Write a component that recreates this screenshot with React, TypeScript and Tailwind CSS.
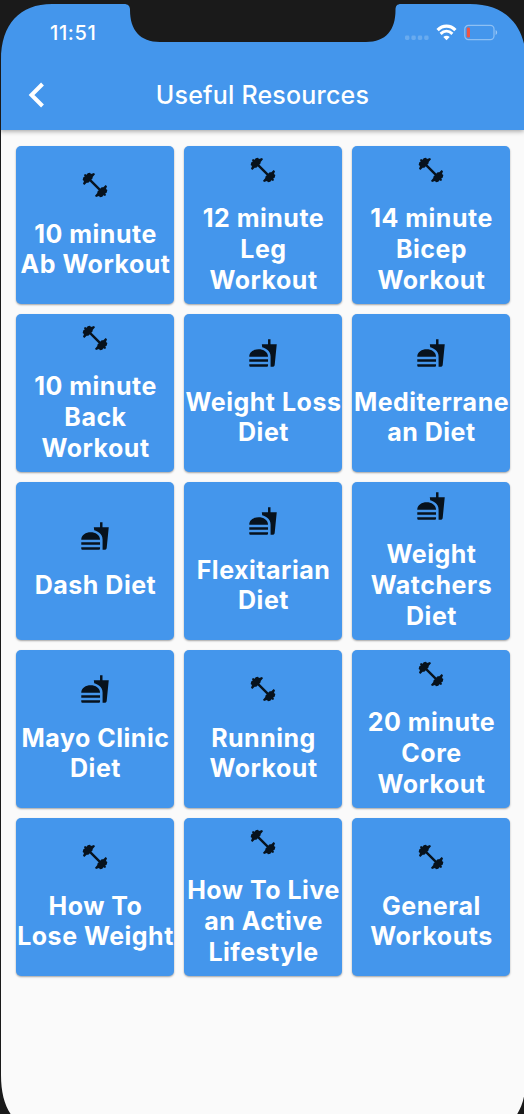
import React from 'react';
import { MdFastfood } from 'react-icons/md';

type Kind = 'workout' | 'diet';

interface Resource {
  kind: Kind;
  lines: string[];
}

const resources: Resource[] = [
  { kind: 'workout', lines: ['10 minute', 'Ab Workout'] },
  { kind: 'workout', lines: ['12 minute', 'Leg', 'Workout'] },
  { kind: 'workout', lines: ['14 minute', 'Bicep', 'Workout'] },
  { kind: 'workout', lines: ['10 minute', 'Back', 'Workout'] },
  { kind: 'diet', lines: ['Weight Loss', 'Diet'] },
  { kind: 'diet', lines: ['Mediterrane', 'an Diet'] },
  { kind: 'diet', lines: ['Dash Diet'] },
  { kind: 'diet', lines: ['Flexitarian', 'Diet'] },
  { kind: 'diet', lines: ['Weight', 'Watchers', 'Diet'] },
  { kind: 'diet', lines: ['Mayo Clinic', 'Diet'] },
  { kind: 'workout', lines: ['Running', 'Workout'] },
  { kind: 'workout', lines: ['20 minute', 'Core', 'Workout'] },
  { kind: 'workout', lines: ['How To', 'Lose Weight'] },
  { kind: 'workout', lines: ['How To Live', 'an Active', 'Lifestyle'] },
  { kind: 'workout', lines: ['General', 'Workouts'] },
];

const PLATES = 'M43 10 46 14 39 22 39 26 26 39 21 39 14 46 10 42 13 34 9 31 11 23 15 21 13 16 16 13 21 15 24 11 31 9 34 13Z';

const DumbbellIcon = () => (
  <svg viewBox="1 1 90 90" className="size-[30px] shrink-0" fill="#07121d">
    <path d="M24 24 69 69" stroke="#07121d" strokeWidth="7" />
    <path d={PLATES} />
    <path d={PLATES} transform="rotate(180 46 46)" />
  </svg>
);

const StatusBar = () => (
  <div className="flex h-[60px] items-start justify-between pr-[26px] pl-[50px] text-white">
    <span className="mt-[21px] text-[20px] leading-6 font-medium tracking-[0.6px]">11:51</span>
    <div className="mt-[24px] flex h-[17px] items-center">
      <svg width="24" height="17" viewBox="0 0 24 17" fill="#fff" fillOpacity="0.2">
        <rect x="0" y="11.5" width="4.4" height="4.4" rx="1.4" />
        <rect x="6.4" y="11.5" width="4.4" height="4.4" rx="1.4" />
        <rect x="12.8" y="11.5" width="4.4" height="4.4" rx="1.4" />
        <rect x="19.2" y="11.5" width="4.4" height="4.4" rx="1.4" />
      </svg>
      <svg className="ml-[7px]" width="21" height="17" viewBox="0 0 21 17" fill="none" stroke="#fff">
        <path d="M1.6 6.1C6.8.9 14.2.9 19.4 6.1" strokeWidth="3.3" />
        <path d="M4.6 9.8C8.1 6.5 12.9 6.5 16.4 9.8" strokeWidth="3" />
        <path d="M7.3 13C9.1 11.2 11.9 11.2 13.7 13L10.5 16.2Z" fill="#fff" stroke="none" />
      </svg>
      <svg className="ml-[7px]" width="34" height="17" viewBox="0 0 34 17" fill="none">
        <rect x="0.8" y="1.4" width="29.2" height="14.2" rx="3.6" stroke="#fff" strokeOpacity="0.4" strokeWidth="1.2" />
        <rect x="2.8" y="3.5" width="3.2" height="10" rx="1.3" fill="#ef5545" />
        <path d="M31.6 6C33.6 6.7 33.6 10.3 31.6 11Z" fill="#fff" fillOpacity="0.45" />
      </svg>
    </div>
  </div>
);

const Header = () => (
  <header className="relative h-[130px] bg-[#4496ec] shadow-[0_1px_5px_rgba(0,0,0,0.4)]">
    <StatusBar />
    <div className="grid h-[70px] grid-cols-[72px_1fr_71px] items-center text-white">
      <svg className="ml-[28px]" width="18" height="26" viewBox="0 0 18 26" fill="none" stroke="#fff" strokeWidth="4">
        <path d="M14.5 2 3.5 13 14.5 24" />
      </svg>
      <h1 className="text-center text-[25px] leading-8 font-medium tracking-[0.2px]">Useful Resources</h1>
    </div>
  </header>
);

const ResourceCard = ({ kind, lines }: Resource) => (
  <div className="flex h-[158px] flex-col items-center justify-center gap-[18.5px] rounded-[5px] bg-[#4496ec] shadow-[0_1px_2px_rgba(0,0,0,0.35)]">
    {kind === 'diet' ? <MdFastfood className="size-[30px] shrink-0 text-[#07121d]" /> : <DumbbellIcon />}
    <div className="pl-px text-center text-[25px] leading-[30.6px] font-bold tracking-[0.5px] whitespace-nowrap text-white">
      {lines.map((line) => (
        <div key={line}>{line}</div>
      ))}
    </div>
  </div>
);

// Dark phone body around the screen, including the notch
const Bezel = () => (
  <svg className="pointer-events-none absolute inset-0" width="524" height="1114" viewBox="0 0 524 1114">
    <path
      fill="#1a1a1a"
      fillRule="evenodd"
      d="M0 0H524V1114H0ZM1 60C1 24 20 4 52 4H124C128 4 130 6 130 10C130 30 140 42 160 42H366C386 42 395.5 30 395.5 10C395.5 6 397 4 401 4H470C506 4 526 26 526 62V1075C526 1115 510 1134 470 1134H56C20 1134 1 1115 1 1075Z"
    />
  </svg>
);

const App = () => {
  return (
    <div className="relative h-[1114px] w-[524px] overflow-hidden bg-[#fafafa] font-[Inter,'Liberation_Sans',sans-serif]">
      <Header />
      <main className="grid grid-cols-[repeat(3,158px)] gap-[10px] pt-4 pl-4">
        {resources.map((resource) => (
          <ResourceCard key={resource.lines.join(' ')} {...resource} />
        ))}
      </main>
      <Bezel />
    </div>
  );
};

export default App;
